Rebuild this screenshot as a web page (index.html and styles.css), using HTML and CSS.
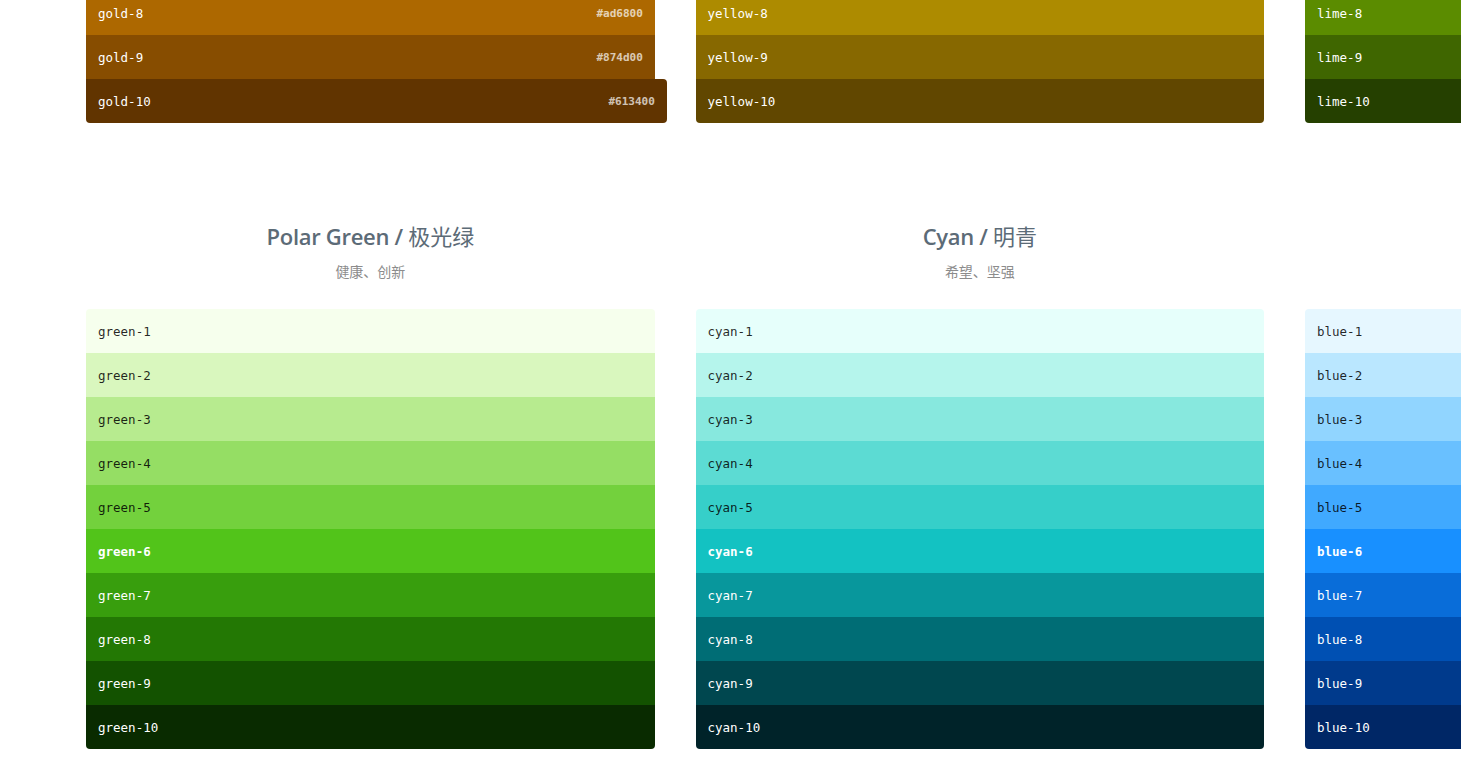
FILE: index.html
```html
<!DOCTYPE html>
<html lang="zh-CN">
<head>
<meta charset="utf-8">
<title>色板</title>
<link rel="stylesheet" href="styles.css">
</head>
<body>
<div class="palettes">
  <section class="palette">
    <div class="palette-title">Calendula Gold / <span class="cjk">金盏花</span><span class="palette-desc">活力、积极</span></div>
    <div class="swatches show-values">
      <div class="swatch light" style="background:#fffbe6"><span>gold-1</span><span class="value">#fffbe6</span></div>
      <div class="swatch light" style="background:#fff1b8"><span>gold-2</span><span class="value">#fff1b8</span></div>
      <div class="swatch light" style="background:#ffe58f"><span>gold-3</span><span class="value">#ffe58f</span></div>
      <div class="swatch light" style="background:#ffd666"><span>gold-4</span><span class="value">#ffd666</span></div>
      <div class="swatch light" style="background:#ffc53d"><span>gold-5</span><span class="value">#ffc53d</span></div>
      <div class="swatch dark primary" style="background:#faad14"><span>gold-6</span><span class="value">#faad14</span></div>
      <div class="swatch dark" style="background:#d48806"><span>gold-7</span><span class="value">#d48806</span></div>
      <div class="swatch dark" style="background:#ad6800"><span>gold-8</span><span class="value">#ad6800</span></div>
      <div class="swatch dark" style="background:#874d00"><span>gold-9</span><span class="value">#874d00</span></div>
      <div class="swatch dark hovered" style="background:#613400"><span>gold-10</span><span class="value">#613400</span></div>
    </div>
  </section>
  <section class="palette">
    <div class="palette-title">Sunrise Yellow / <span class="cjk">日出黄</span><span class="palette-desc">出生、阳光</span></div>
    <div class="swatches">
      <div class="swatch light" style="background:#feffe6"><span>yellow-1</span></div>
      <div class="swatch light" style="background:#ffffb8"><span>yellow-2</span></div>
      <div class="swatch light" style="background:#fffb8f"><span>yellow-3</span></div>
      <div class="swatch light" style="background:#fff566"><span>yellow-4</span></div>
      <div class="swatch light" style="background:#ffec3d"><span>yellow-5</span></div>
      <div class="swatch light primary" style="background:#fadb14"><span>yellow-6</span></div>
      <div class="swatch dark" style="background:#d4b106"><span>yellow-7</span></div>
      <div class="swatch dark" style="background:#ad8b00"><span>yellow-8</span></div>
      <div class="swatch dark" style="background:#876800"><span>yellow-9</span></div>
      <div class="swatch dark" style="background:#614700"><span>yellow-10</span></div>
    </div>
  </section>
  <section class="palette">
    <div class="palette-title">Lime / <span class="cjk">青柠</span><span class="palette-desc">自然、生机</span></div>
    <div class="swatches">
      <div class="swatch light" style="background:#fcffe6"><span>lime-1</span></div>
      <div class="swatch light" style="background:#f4ffb8"><span>lime-2</span></div>
      <div class="swatch light" style="background:#eaff8f"><span>lime-3</span></div>
      <div class="swatch light" style="background:#d3f261"><span>lime-4</span></div>
      <div class="swatch light" style="background:#bae637"><span>lime-5</span></div>
      <div class="swatch light primary" style="background:#a0d911"><span>lime-6</span></div>
      <div class="swatch dark" style="background:#7cb305"><span>lime-7</span></div>
      <div class="swatch dark" style="background:#5b8c00"><span>lime-8</span></div>
      <div class="swatch dark" style="background:#3f6600"><span>lime-9</span></div>
      <div class="swatch dark" style="background:#254000"><span>lime-10</span></div>
    </div>
  </section>
  <section class="palette">
    <div class="palette-title">Polar Green / <span class="cjk">极光绿</span><span class="palette-desc">健康、创新</span></div>
    <div class="swatches">
      <div class="swatch light" style="background:#f6ffed"><span>green-1</span></div>
      <div class="swatch light" style="background:#d9f7be"><span>green-2</span></div>
      <div class="swatch light" style="background:#b7eb8f"><span>green-3</span></div>
      <div class="swatch light" style="background:#95de64"><span>green-4</span></div>
      <div class="swatch light" style="background:#73d13d"><span>green-5</span></div>
      <div class="swatch dark primary" style="background:#52c41a"><span>green-6</span></div>
      <div class="swatch dark" style="background:#389e0d"><span>green-7</span></div>
      <div class="swatch dark" style="background:#237804"><span>green-8</span></div>
      <div class="swatch dark" style="background:#135200"><span>green-9</span></div>
      <div class="swatch dark" style="background:#092b00"><span>green-10</span></div>
    </div>
  </section>
  <section class="palette">
    <div class="palette-title">Cyan / <span class="cjk">明青</span><span class="palette-desc">希望、坚强</span></div>
    <div class="swatches">
      <div class="swatch light" style="background:#e6fffb"><span>cyan-1</span></div>
      <div class="swatch light" style="background:#b5f5ec"><span>cyan-2</span></div>
      <div class="swatch light" style="background:#87e8de"><span>cyan-3</span></div>
      <div class="swatch light" style="background:#5cdbd3"><span>cyan-4</span></div>
      <div class="swatch light" style="background:#36cfc9"><span>cyan-5</span></div>
      <div class="swatch dark primary" style="background:#13c2c2"><span>cyan-6</span></div>
      <div class="swatch dark" style="background:#08979c"><span>cyan-7</span></div>
      <div class="swatch dark" style="background:#006d75"><span>cyan-8</span></div>
      <div class="swatch dark" style="background:#00474f"><span>cyan-9</span></div>
      <div class="swatch dark" style="background:#002329"><span>cyan-10</span></div>
    </div>
  </section>
  <section class="palette">
    <div class="palette-title">Daybreak Blue / <span class="cjk">拂晓蓝</span><span class="palette-desc">包容、科技、普惠</span></div>
    <div class="swatches">
      <div class="swatch light" style="background:#e6f7ff"><span>blue-1</span></div>
      <div class="swatch light" style="background:#bae7ff"><span>blue-2</span></div>
      <div class="swatch light" style="background:#91d5ff"><span>blue-3</span></div>
      <div class="swatch light" style="background:#69c0ff"><span>blue-4</span></div>
      <div class="swatch light" style="background:#40a9ff"><span>blue-5</span></div>
      <div class="swatch dark primary" style="background:#1890ff"><span>blue-6</span></div>
      <div class="swatch dark" style="background:#096dd9"><span>blue-7</span></div>
      <div class="swatch dark" style="background:#0050b3"><span>blue-8</span></div>
      <div class="swatch dark" style="background:#003a8c"><span>blue-9</span></div>
      <div class="swatch dark" style="background:#002766"><span>blue-10</span></div>
    </div>
  </section>
</div>
</body>
</html>
```

FILE: styles.css
```css
html, body {
  margin: 0;
  padding: 0;
  background: #fff;
  overflow: hidden;
}

body {
  font-family: "Open Sans", "Noto Sans CJK SC", sans-serif;
}

/* page is shown scrolled down: the gold row's title and first swatches are above the fold */
.palettes {
  display: flex;
  flex-wrap: wrap;
  width: 1787.75px;
  column-gap: 40.75px;
  row-gap: 97px;
  margin: -406px 0 0 86px;
}

.palette {
  width: 568.75px;
}

.palette-title {
  text-align: center;
  color: #5c6b77;
  font-size: 22px;
  font-weight: 600;
  letter-spacing: -0.3px;
  line-height: 32px;
  height: 62px;
  margin-bottom: 27px;
}

.cjk {
  font-family: "Noto Sans CJK SC", sans-serif;
  font-weight: 400;
  letter-spacing: 0;
  line-height: 1;
}

.palette-desc {
  display: block;
  margin-top: 8px;
  color: #8c8c8c;
  font-family: "Noto Sans CJK SC", sans-serif;
  font-size: 14px;
  font-weight: 400;
  letter-spacing: 0;
  line-height: 22px;
}

.swatches {
  display: flex;
  flex-direction: column;
}

.swatch {
  height: 44px;
  padding: 0 12px;
  display: flex;
  align-items: center;
  justify-content: space-between;
  font-family: "DejaVu Sans Mono", "Liberation Mono", monospace;
  font-size: 12.5px;
}

.swatch:first-child {
  border-radius: 4px 4px 0 0;
}

.swatch:last-child {
  border-radius: 0 0 4px 4px;
}

.swatch.light {
  color: rgba(0, 0, 0, 0.85);
}

.swatch.dark {
  color: #fff;
}

.swatch.primary {
  font-weight: 700;
}

.value {
  display: none;
  font-size: 11px;
  opacity: 0.7;
  font-weight: 700;
}

.show-values .value {
  display: inline;
}

.swatch.hovered {
  margin-right: -12px;
  border-radius: 0 4px 4px 4px;
}
```
